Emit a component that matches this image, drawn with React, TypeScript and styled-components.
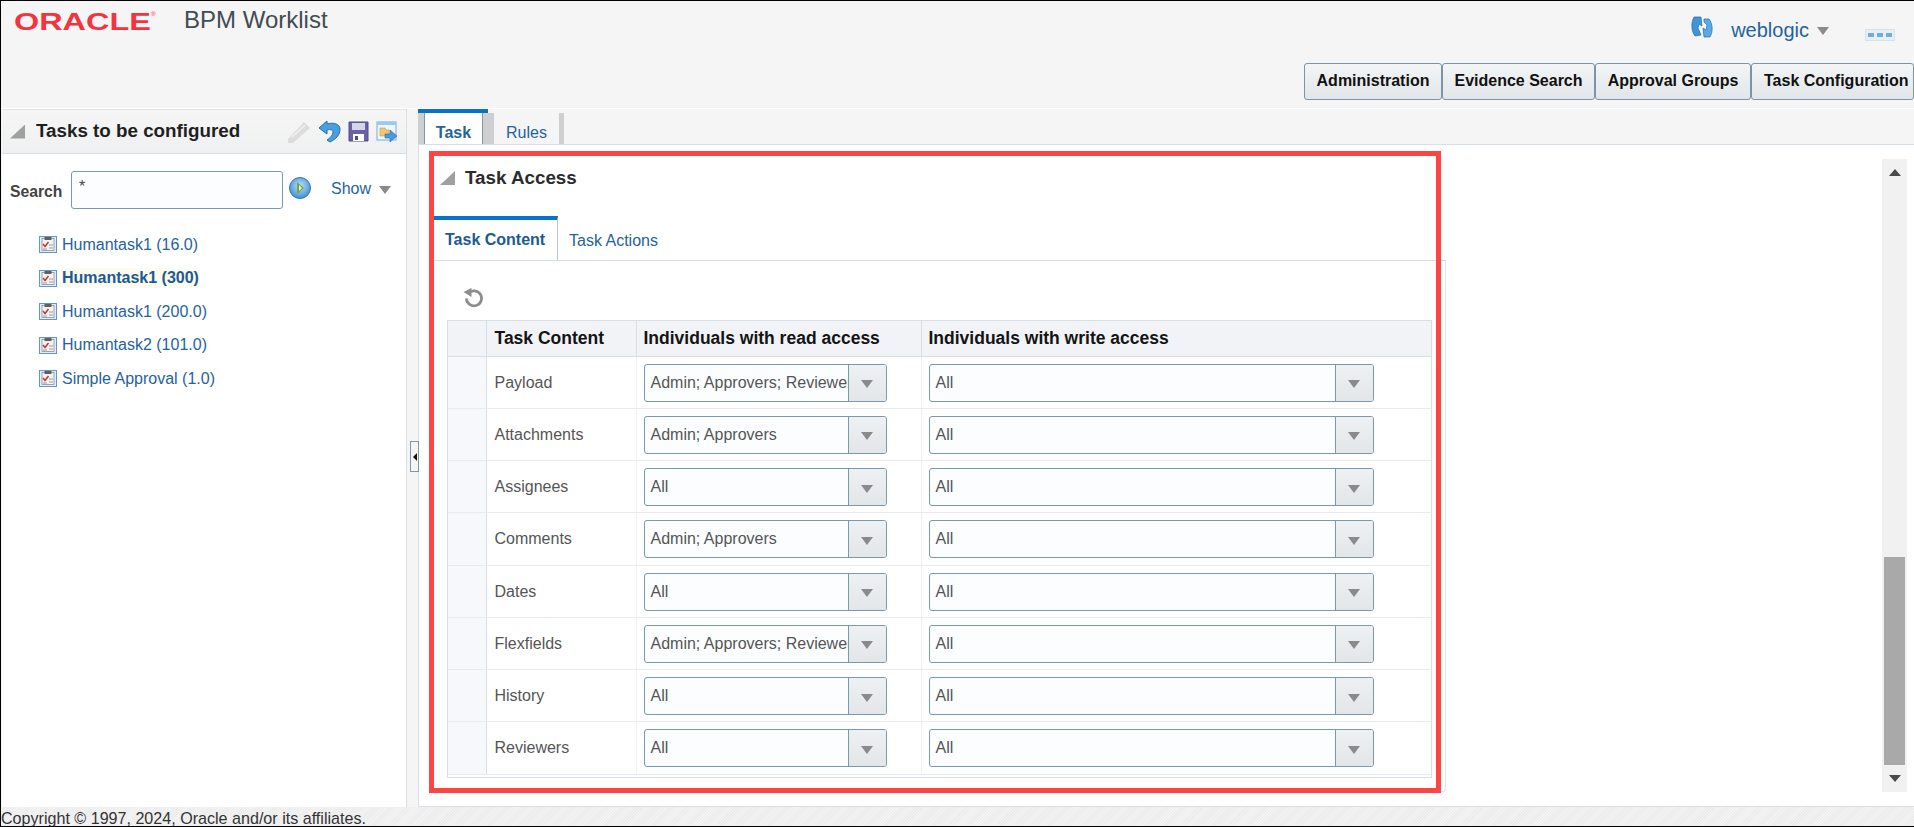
import React from "react";
import styled, { createGlobalStyle } from "styled-components";

const Global = createGlobalStyle`
  html, body { margin: 0; padding: 0; background: #fff; overflow: hidden; }
  * { box-sizing: border-box; }
`;

const FONT = `"Liberation Sans", Arial, sans-serif`;
const LINK = "#25639c";

const Page = styled.div`
  width: 1914px;
  height: 827px;
  display: flex;
  flex-direction: column;
  border-top: 1px solid #000;
  border-left: 1px solid #000;
  border-bottom: 1px solid #000;
  font-family: ${FONT};
  background: #f5f5f5;
  overflow: hidden;
`;

const Header = styled.header`
  height: 108px;
  flex: none;
  display: flex;
  flex-direction: column;
  border-bottom: 1px solid #fff;
`;
const HeaderTop = styled.div`
  height: 62px;
  display: flex;
  align-items: flex-start;
`;
const Brand = styled.div`
  width: 183px;
  height: 40px;
  padding: 7px 0 0 13px;
  overflow: hidden;
`;
const BrandText = styled.span`
  display: inline-block;
  font-size: 24px;
  line-height: 27px;
  font-weight: 700;
  color: #f5333f;
  transform: scaleX(1.35);
  transform-origin: left center;
  white-space: nowrap;
`;
const BrandMark = styled.sup`
  font-size: 5px;
  font-weight: 400;
  vertical-align: 14px;
  line-height: 0;
`;
const AppTitle = styled.div`
  font-size: 24px;
  line-height: 28px;
  color: #434b52;
  padding-top: 5px;
`;
const UserArea = styled.div`
  margin-left: auto;
  display: flex;
  align-items: flex-start;
  padding: 15px 19px 0 0;
`;
const UserName = styled.span`
  font-size: 20px;
  line-height: 24px;
  color: ${LINK};
  margin-left: 18px;
  margin-top: 2px;
`;
const Caret = styled.span<{ $w?: number; $h?: number; $c?: string }>`
  display: inline-block;
  flex: none;
  width: 0;
  height: 0;
  border-left: ${(p) => (p.$w ?? 13) / 2}px solid transparent;
  border-right: ${(p) => (p.$w ?? 13) / 2}px solid transparent;
  border-top: ${(p) => p.$h ?? 8}px solid ${(p) => p.$c ?? "#8a8a8a"};
`;
const UserCaret = styled(Caret)`
  margin: 11px 0 0 8px;
`;
const DotsBox = styled.span`
  width: 30px;
  height: 12px;
  margin: 13px 0 0 36px;
  background: #e9eef3;
  border: 1px solid #d8e0e7;
  display: flex;
  align-items: center;
  justify-content: center;
  gap: 3px;
`;
const Dot = styled.i`
  width: 6px;
  height: 4px;
  background: #69aee8;
`;
const Nav = styled.nav`
  display: flex;
  justify-content: flex-end;
  height: 37px;
  overflow: hidden;
`;
const NavButton = styled.button<{ $w: number; $flush?: boolean }>`
  width: ${(p) => p.$w}px;
  height: 37px;
  flex: none;
  padding: 0 0 2px ${(p) => (p.$flush ? 12 : 0)}px;
  text-align: ${(p) => (p.$flush ? "left" : "center")};
  border: 1px solid #7c94a6;
  border-radius: 3px;
  background: linear-gradient(#f3f5f6, #e2e6e9);
  font: 700 16px/20px ${FONT};
  color: #111;
`;

const Body = styled.div`
  flex: 1;
  min-height: 0;
  display: flex;
`;

const LeftPanel = styled.aside`
  width: 405px;
  flex: none;
  margin-left: 1px;
  background: #fff;
  border-right: 1px solid #d9e0e5;
  display: flex;
  flex-direction: column;
`;
const LeftHead = styled.div`
  height: 45px;
  flex: none;
  background: linear-gradient(#f6f6f6, #eff0f1);
  border-top: 1px solid #dfe4e8;
  border-bottom: 1px solid #d9e0e5;
  display: flex;
  align-items: center;
  padding-left: 8px;
`;
const Disclosure = styled.span`
  display: block;
  flex: none;
  width: 15px;
  height: 14px;
  background: #a0a0a0;
  clip-path: polygon(100% 0, 100% 100%, 0 100%);
`;
const LeftTitle = styled.h2`
  margin: -2px 0 0 11px;
  font-size: 18.8px;
  line-height: 24px;
  font-weight: 700;
  color: #1f1f1f;
`;
const HeadIcons = styled.div`
  margin-left: auto;
  display: flex;
  align-items: center;
  gap: 7px;
  padding-right: 8px;
`;
const SearchRow = styled.div`
  display: flex;
  align-items: center;
  height: 38px;
  margin-top: 17px;
  padding-left: 8px;
`;
const SearchLabel = styled.label`
  width: 61px;
  font-size: 15.7px;
  font-weight: 700;
  color: #444;
  margin-top: 3px;
`;
const SearchField = styled.div`
  width: 212px;
  height: 38px;
  border: 1px solid #7b98ad;
  border-radius: 3px;
  background: #fbfdff;
  font-size: 16px;
  line-height: 30px;
  padding-left: 7px;
  color: #444;
`;
const GoWrap = styled.span`
  display: flex;
  margin: -4px 0 0 6px;
`;
const ShowLink = styled.span`
  font-size: 16px;
  color: ${LINK};
  margin-left: 20px;
  margin-top: -2px;
`;
const ShowCaret = styled(Caret)`
  margin: 0 0 0 8px;
`;
const Tree = styled.ul`
  list-style: none;
  margin: 19px 0 0;
  padding: 0 0 0 37px;
`;
const TreeItem = styled.li`
  height: 33.5px;
  display: flex;
  align-items: center;
  gap: 4px;
`;
const TreeLabel = styled.span<{ $sel?: boolean }>`
  font-size: 16px;
  line-height: 20px;
  color: ${(p) => (p.$sel ? "#1b5a94" : LINK)};
  font-weight: ${(p) => (p.$sel ? 700 : 400)};
  background: ${(p) => (p.$sel ? "#fbfbef" : "transparent")};
  padding: 0 1px;
`;

const Splitter = styled.div`
  width: 11px;
  flex: none;
  display: flex;
  flex-direction: column;
  align-items: flex-start;
  padding-top: 332px;
  padding-left: 3px;
  position: relative;
  z-index: 1;
`;
const SplitHandle = styled.div`
  width: 9px;
  height: 31px;
  flex: none;
  border: 1px solid #7f97a8;
  background: #f5f5f5;
  display: flex;
  align-items: center;
  justify-content: center;
`;
const SplitArrow = styled.span`
  width: 0;
  height: 0;
  border-top: 4px solid transparent;
  border-bottom: 4px solid transparent;
  border-right: 4px solid #111;
`;

const RightPanel = styled.main`
  flex: 1;
  min-width: 0;
  display: flex;
  flex-direction: column;
`;
const TabBar = styled.div`
  height: 36px;
  flex: none;
  display: flex;
  border-bottom: 1px solid #d6dfe6;
`;
const MainTab = styled.div<{ $on?: boolean; $w: number }>`
  position: relative;
  margin-top: 4px;
  width: ${(p) => p.$w}px;
  height: 31px;
  flex: none;
  padding-top: 10px;
  text-align: center;
  font-size: 16px;
  line-height: 20px;
  color: ${LINK};
  font-weight: ${(p) => (p.$on ? 700 : 400)};
  background: ${(p) => (p.$on ? "#fff" : "transparent")};
  ${(p) =>
    p.$on
      ? `border-left: 1px solid #7f97a8; border-right: 1px solid #7f97a8;`
      : ""}
`;
const TabSep = styled.div<{ $w: number }>`
  width: ${(p) => p.$w}px;
  margin-top: 4px;
  flex: none;
  background: #cdcfd0;
`;
const TabLead = styled.div`
  width: 6px;
  flex: none;
  position: relative;
  margin-top: 4px;
  background: #cdcfd0;
  &::before {
    content: "";
    position: absolute;
    top: -4px;
    left: 0;
    width: 70px;
    height: 4px;
    background: #0572ce;
  }
`;

const Content = styled.div`
  flex: 1;
  min-height: 0;
  position: relative;
  display: flex;
  background: #fff;
  border-left: 1px solid #d9e0e5;
  border-bottom: 1px solid #d6dfe6;
`;
const Scroller = styled.div`
  flex: 1;
  min-width: 0;
  padding: 11px 0 0 15px;
`;
const SectionHead = styled.div`
  display: flex;
  align-items: center;
  height: 44px;
  padding-left: 6px;
`;
const SectionTitle = styled.h3`
  margin: 0 0 0 10px;
  font-size: 18.8px;
  line-height: 24px;
  font-weight: 700;
  color: #2b2b2b;
`;
const SubTabs = styled.div`
  width: 1012px;
  height: 45px;
  margin-top: 16px;
  display: flex;
  border-bottom: 1px solid #d6dfe6;
`;
const SubTab = styled.div<{ $on?: boolean }>`
  height: 44px;
  font-size: 16px;
  line-height: 20px;
  white-space: nowrap;
  color: ${LINK};
  background: #fff;
  ${(p) =>
    p.$on
      ? `font-weight: 700; color: #1b5a94; width: 124px; border-top: 4px solid #0572ce; border-right: 1px solid #b9c7d2; padding: 10px 0 0 11px;`
      : `padding: 15px 0 0 11px;`}
`;
const TabPanel = styled.div`
  width: 1012px;
  height: 531px;
  border-right: 1px solid #dfe4e8;
  border-bottom: 1px solid #dfe4e8;
  border-bottom-right-radius: 3px;
  padding: 26px 0 0 13px;
`;
const ToolRow = styled.div`
  height: 33px;
  padding-left: 16px;
`;
const TableWrap = styled.div`
  width: 985px;
  height: 458px;
  border: 1px solid #d6dfe6;
`;
const Table = styled.table`
  border-collapse: collapse;
  table-layout: fixed;
  width: 983px;
`;
const HeadCell = styled.th<{ $pad?: number }>`
  height: 35px;
  padding: 0 0 0 ${(p) => p.$pad ?? 7}px;
  text-align: left;
  font-size: 17.5px;
  font-weight: 700;
  color: #141414;
  background: #f2f3f7;
  border-bottom: 1px solid #d6dfe6;
  border-right: 1px solid #d6dfe6;
  white-space: nowrap;
  &:last-child {
    border-right: none;
  }
`;
const Row = styled.tr`
  height: 52.25px;
`;
const RowHead = styled.td`
  background: #f7f8fb;
  border-right: 1px solid #d6dfe6;
  border-bottom: 1px solid #e8eaed;
`;
const Cell = styled.td<{ $pad?: number }>`
  padding: 1px 0 0 ${(p) => p.$pad ?? 7}px;
  font-size: 16px;
  color: #555;
  border-right: 1px solid #eef0f2;
  border-bottom: 1px solid #e8eaed;
  &:last-child {
    border-right: none;
  }
`;
const Select = styled.div<{ $w: number }>`
  width: ${(p) => p.$w}px;
  height: 38px;
  display: flex;
  border: 1px solid #7b98ad;
  border-radius: 3px;
  background: #fbfdff;
  overflow: hidden;
`;
const SelectValue = styled.div`
  flex: 1;
  min-width: 0;
  padding-left: 6px;
  line-height: 36px;
  font-size: 16px;
  color: #555;
  white-space: nowrap;
  overflow: hidden;
`;
const SelectButton = styled.div`
  width: 38px;
  flex: none;
  border-left: 1px solid #7b98ad;
  background: linear-gradient(#eef1f3, #e2e6e9);
  display: flex;
  align-items: center;
  justify-content: center;
  padding-top: 3px;
`;
const Scrollbar = styled.div`
  width: 25px;
  flex: none;
  margin: 14px 7px 14px 0;
  background: #f1f1f1;
  display: flex;
  flex-direction: column;
`;
const ScrollBtn = styled.div`
  height: 27px;
  flex: none;
  display: flex;
  align-items: center;
  justify-content: center;
`;
const ScrollUp = styled.span`
  width: 0;
  height: 0;
  border-left: 6px solid transparent;
  border-right: 6px solid transparent;
  border-bottom: 7px solid #4a4a4a;
`;
const ScrollTrack = styled.div`
  flex: 1;
  display: flex;
  flex-direction: column;
  justify-content: flex-end;
  align-items: center;
`;
const ScrollThumb = styled.div`
  width: 21px;
  height: 208px;
  background: #a9a9a9;
`;
const Highlight = styled.div`
  position: absolute;
  left: 10px;
  top: 6px;
  width: 1012px;
  height: 642px;
  border: 5px solid #ff4444;
  pointer-events: none;
`;

const Footer = styled.footer`
  height: 19px;
  flex: none;
  font-size: 16.1px;
  line-height: 23px;
  color: #333;
  white-space: nowrap;
  overflow: hidden;
  background: repeating-linear-gradient(135deg, #f3f3f3 0 1px, #ececec 1px 2px);
`;

const IconPencil = () => (
  <svg width="24" height="24" viewBox="0 0 24 24">
    <path d="M1 19 L17 2 L23 8 L6 23 L1 23 Z" fill="#dcdcdc" />
    <path d="M5 17 L18 5" stroke="#ececec" strokeWidth="2" />
  </svg>
);
const IconUndo = () => (
  <svg width="23" height="23" viewBox="0 0 23 23">
    <path
      d="M9 1 L1 8 L9 14 L9 10 C13 9 15 10 15 12 C15 15 12 18 9 20 L12 22 C18 19 22 15 22 9 C22 4 15 2 9 4 Z"
      fill="#4a9fe0"
      stroke="#1f6fb0"
      strokeWidth="1"
      strokeLinejoin="round"
    />
  </svg>
);
const IconSave = () => (
  <svg width="21" height="21" viewBox="0 0 21 21">
    <path d="M1 1 H20 V20 H1 Z" fill="#6a62a8" stroke="#4f4a88" />
    <rect x="4" y="2" width="13" height="7" fill="#d6d6e6" />
    <rect x="5" y="13" width="11" height="7" fill="#fff" />
    <rect x="7" y="15" width="3" height="4" fill="#4f4a88" />
  </svg>
);
const IconOpen = () => (
  <svg width="22" height="22" viewBox="0 0 22 22">
    <rect x="1" y="1" width="19" height="18" fill="#eef5fb" stroke="#74aede" />
    <rect x="1" y="1" width="19" height="3" fill="#9ccaee" />
    <path d="M4 7 H9 L10 9 H13 V15 H4 Z" fill="#efc777" stroke="#c49a45" strokeWidth=".6" />
    <path d="M9 13 H14 V9 L21 15 L14 21 V17 H9 Z" fill="#4b9ad8" stroke="#1f6fb0" strokeWidth=".6" />
  </svg>
);
const IconGo = () => (
  <svg width="22" height="22" viewBox="0 0 22 22">
    <defs>
      <radialGradient id="go" cx="50%" cy="40%" r="60%">
        <stop offset="0" stopColor="#bfe0f6" />
        <stop offset="1" stopColor="#3f8fd2" />
      </radialGradient>
    </defs>
    <circle cx="11" cy="11" r="10.5" fill="url(#go)" stroke="#2a75b5" />
    <path d="M8 5 L15 11 L8 17 Z" fill="#6da84a" />
    <path d="M10 8 L13 11 L10 14 Z" fill="#e8f4d8" />
  </svg>
);
const IconSync = () => (
  <svg width="22" height="22" viewBox="0 0 22 22">
    <path d="M3 1 H10 L11 10 L8 8 L7 12 L10 19 L4 20 C0 15 0 6 3 1 Z" fill="#3f95d8" stroke="#1f6fb0" strokeWidth=".7" />
    <path d="M13 3 H18 C22 8 22 16 19 21 H13 L12 12 L15 14 L16 9 L13 6 Z" fill="#5aaae4" stroke="#1f6fb0" strokeWidth=".7" />
  </svg>
);
const IconTask = () => (
  <svg width="18" height="17" viewBox="0 0 18 17">
    <rect x=".5" y=".5" width="17" height="16" fill="#e4ecf4" stroke="#5b9ad0" />
    <rect x="3" y="2.5" width="12" height="12" fill="#f4f4f4" stroke="#808080" strokeWidth=".7" />
    <rect x="5.5" y="1" width="7" height="3" fill="#5f5f5f" />
    <path d="M4 8 L6 10.5 L9.5 6" fill="none" stroke="#c8352c" strokeWidth="1.5" />
    <path d="M10 9 H14 M10 12 H14 M4 13 H8" stroke="#9a9a9a" strokeWidth="1" />
  </svg>
);
const IconReset = () => (
  <svg width="21" height="21" viewBox="0 0 21 21">
    <path
      d="M5.5 6.2 A7.5 7.5 0 1 1 3.5 11.5"
      fill="none"
      stroke="#8d8d8d"
      strokeWidth="2.8"
    />
    <path d="M0.5 5 L8.5 1 L8.5 10 Z" fill="#8d8d8d" />
  </svg>
);

const tasks = [
  { label: "Humantask1 (16.0)" },
  { label: "Humantask1 (300)", sel: true },
  { label: "Humantask1 (200.0)" },
  { label: "Humantask2 (101.0)" },
  { label: "Simple Approval (1.0)" },
];
const rows = [
  ["Payload", "Admin; Approvers; Reviewers"],
  ["Attachments", "Admin; Approvers"],
  ["Assignees", "All"],
  ["Comments", "Admin; Approvers"],
  ["Dates", "All"],
  ["Flexfields", "Admin; Approvers; Reviewers"],
  ["History", "All"],
  ["Reviewers", "All"],
];

const Combo = ({ value, w }: { value: string; w: number }) => (
  <Select $w={w}>
    <SelectValue>{value}</SelectValue>
    <SelectButton>
      <Caret />
    </SelectButton>
  </Select>
);

export default function App() {
  return (
    <Page>
      <Global />
      <Header>
        <HeaderTop>
          <Brand>
            <BrandText>
              ORACLE<BrandMark>®</BrandMark>
            </BrandText>
          </Brand>
          <AppTitle>BPM Worklist</AppTitle>
          <UserArea>
            <IconSync />
            <UserName>weblogic</UserName>
            <UserCaret />
            <DotsBox>
              <Dot />
              <Dot />
              <Dot />
            </DotsBox>
          </UserArea>
        </HeaderTop>
        <Nav>
          <NavButton $w={138}>Administration</NavButton>
          <NavButton $w={153}>Evidence Search</NavButton>
          <NavButton $w={156}>Approval Groups</NavButton>
          <NavButton $w={163} $flush>
            Task Configuration
          </NavButton>
        </Nav>
      </Header>
      <Body>
        <LeftPanel>
          <LeftHead>
            <Disclosure />
            <LeftTitle>Tasks to be configured</LeftTitle>
            <HeadIcons>
              <IconPencil />
              <IconUndo />
              <IconSave />
              <IconOpen />
            </HeadIcons>
          </LeftHead>
          <SearchRow>
            <SearchLabel>Search</SearchLabel>
            <SearchField>*</SearchField>
            <GoWrap>
              <IconGo />
            </GoWrap>
            <ShowLink>Show</ShowLink>
            <ShowCaret />
          </SearchRow>
          <Tree>
            {tasks.map((t) => (
              <TreeItem key={t.label}>
                <IconTask />
                <TreeLabel $sel={t.sel}>{t.label}</TreeLabel>
              </TreeItem>
            ))}
          </Tree>
        </LeftPanel>
        <Splitter>
          <SplitHandle>
            <SplitArrow />
          </SplitHandle>
        </Splitter>
        <RightPanel>
          <TabBar>
            <TabLead />
            <MainTab $on $w={59}>
              Task
            </MainTab>
            <TabSep $w={11} />
            <MainTab $w={65}>Rules</MainTab>
            <TabSep $w={5} />
          </TabBar>
          <Content>
            <Scroller>
              <SectionHead>
                <Disclosure />
                <SectionTitle>Task Access</SectionTitle>
              </SectionHead>
              <SubTabs>
                <SubTab $on>Task Content</SubTab>
                <SubTab>Task Actions</SubTab>
              </SubTabs>
              <TabPanel>
                <ToolRow>
                  <IconReset />
                </ToolRow>
                <TableWrap>
                  <Table>
                    <colgroup>
                      <col width={38} />
                      <col width={150} />
                      <col width={285} />
                      <col width={510} />
                    </colgroup>
                    <thead>
                      <tr>
                        <HeadCell />
                        <HeadCell $pad={8}>Task Content</HeadCell>
                        <HeadCell>Individuals with read access</HeadCell>
                        <HeadCell>Individuals with write access</HeadCell>
                      </tr>
                    </thead>
                    <tbody>
                      {rows.map(([name, read]) => (
                        <Row key={name}>
                          <RowHead />
                          <Cell $pad={8}>{name}</Cell>
                          <Cell>
                            <Combo value={read} w={243} />
                          </Cell>
                          <Cell>
                            <Combo value="All" w={445} />
                          </Cell>
                        </Row>
                      ))}
                    </tbody>
                  </Table>
                </TableWrap>
              </TabPanel>
            </Scroller>
            <Scrollbar>
              <ScrollBtn>
                <ScrollUp />
              </ScrollBtn>
              <ScrollTrack>
                <ScrollThumb />
              </ScrollTrack>
              <ScrollBtn>
                <Caret $w={12} $h={7} $c="#4a4a4a" />
              </ScrollBtn>
            </Scrollbar>
            <Highlight />
          </Content>
        </RightPanel>
      </Body>
      <Footer>Copyright © 1997, 2024, Oracle and/or its affiliates.</Footer>
    </Page>
  );
}
